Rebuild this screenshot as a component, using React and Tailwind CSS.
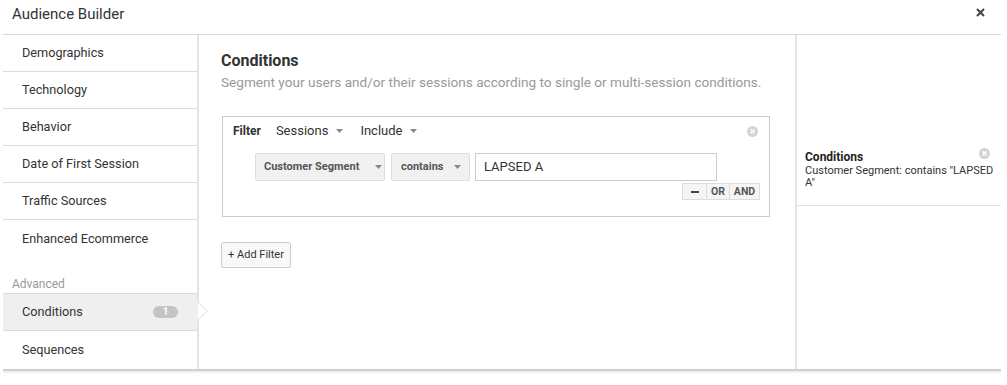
import React from "react";

function Caret() {
  return (
    <svg width="7" height="4" viewBox="0 0 7 4" className="ml-[8px]">
      <path d="M0 0 L7 0 L3.5 4 Z" fill="#888" />
    </svg>
  );
}

function CloseCircle() {
  return (
    <svg width="11" height="11" viewBox="0 0 11 11">
      <circle cx="5.5" cy="5.5" r="5.5" fill="#d4d4d4" />
      <path d="M3.5 3.5 L7.5 7.5 M7.5 3.5 L3.5 7.5" stroke="#fff" strokeWidth="1.4" />
    </svg>
  );
}

const items = [
  "Demographics",
  "Technology",
  "Behavior",
  "Date of First Session",
  "Traffic Sources",
];

export default function App() {
  return (
    <div className="w-[1007px] h-[385px] bg-white font-['Roboto',sans-serif] text-[#333] overflow-hidden">
      <div className="ml-[3px] w-[998px]">
        {/* header */}
        <div className="h-[35px] border-b border-[#d6d6d6] flex items-center justify-between pl-[9px] pr-[16px]">
          <div className="text-[15px] leading-[18px] text-[#333] -mt-[7px]">Audience Builder</div>
          <svg width="9" height="9" viewBox="0 0 9 9" className="-mt-[10px]">
            <path d="M1 1 L8 8 M8 1 L1 8" stroke="#444" strokeWidth="2" />
          </svg>
        </div>
        {/* body */}
        <div className="flex h-[336px] border-b-2 border-[#cfcfcf]">
          {/* sidebar */}
          <div className="w-[196px] border-r-2 border-[#e4e4e4] flex flex-col">
            {items.map((t) => (
              <div key={t} className="h-[37px] border-b border-[#dcdcdc] flex items-center pl-[19px] text-[12.7px]">
                {t}
              </div>
            ))}
            <div className="h-[37px] flex items-center pl-[19px] text-[12.7px]">Enhanced Ecommerce</div>
            <div className="h-[36px] flex items-end pl-[9px] pb-[1px] text-[12px] text-[#9a9a9a] leading-[15px]">Advanced</div>
            <div className="relative h-[38px] border-t border-b border-[#dcdcdc] bg-[#efefef] flex items-center justify-between pl-[19px] pr-[19px] text-[12.7px]">
              <span>Conditions</span>
              <span className="w-[25px] h-[12px] rounded-full bg-[#c4c4c4] text-white text-[10px] font-bold leading-[12px] flex items-center justify-center">1</span>
              <svg width="12" height="18" viewBox="0 0 12 18" className="absolute left-full top-[8px]">
                <path d="M0.5 0 L10.5 9 L0.5 18" fill="#fff" stroke="#dcdcdc" strokeWidth="1" />
              </svg>
            </div>
            <div className="h-[37px] flex items-center pl-[19px] text-[12.7px]">Sequences</div>
          </div>
          {/* main */}
          <div className="w-[596px] pl-[22px] pt-[16px]">
            <div className="text-[16px] leading-[19px] font-bold text-[#333]">Conditions</div>
            <div className="text-[13.6px] leading-[16px] text-[#999] mt-[4px] whitespace-nowrap">
              Segment your users and/or their sessions according to single or multi-session conditions.
            </div>
            <div className="ml-px mt-[26px] w-[548px] border border-[#cccccc] pl-[10px] pr-[9px] pt-[6px] pb-[16px]">
              <div className="flex items-center justify-between h-[16px]">
                <div className="flex items-center text-[12px]">
                  <span className="font-bold">Filter</span>
                  <span className="ml-[15px] text-[13px]">Sessions</span>
                  <Caret />
                  <span className="ml-[17px] text-[13px]">Include</span>
                  <Caret />
                </div>
                <div className="mr-[2px] mt-[1px]">
                  <CloseCircle />
                </div>
              </div>
              <div className="flex ml-[22px] mt-[14px] h-[28px]">
                <div className="w-[130px] h-[28px] bg-[#f1f1f1] border border-[#dedede] rounded-[2px] flex items-center pl-[8px] text-[11px] font-bold text-[#555] whitespace-nowrap">
                  Customer Segment
                  <span className="ml-[8px]"><Caret /></span>
                </div>
                <div className="ml-[6px] w-[79px] h-[28px] bg-[#f1f1f1] border border-[#dedede] rounded-[2px] flex items-center pl-[9px] text-[11px] font-bold text-[#555] whitespace-nowrap">
                  contains
                  <span className="ml-[3px]"><Caret /></span>
                </div>
                <div className="ml-[5px] w-[242px] h-[28px] border border-[#cccccc] flex items-center pl-[8px] text-[13px] text-[#333]">
                  LAPSED A
                </div>
              </div>
              <div className="flex justify-end mt-[2px]">
                <div className="flex h-[17px] border border-[#dddddd] bg-[#f5f5f5] text-[10.5px] font-bold text-[#555] leading-[15px]">
                  <div className="w-[24px] flex items-center justify-center border-r border-[#dddddd]">
                    <span className="w-[8px] h-[2px] bg-[#444]"></span>
                  </div>
                  <div className="w-[23px] flex items-center justify-center border-r border-[#dddddd]">OR</div>
                  <div className="w-[29px] flex items-center justify-center">AND</div>
                </div>
              </div>
            </div>
            <div className="mt-[25px] w-[70px] h-[26px] border border-[#cccccc] rounded-[2px] bg-[#f8f8f8] flex items-center justify-center text-[11px] text-[#333]">
              + Add Filter
            </div>
          </div>
          {/* right */}
          <div className="w-[206px] border-l-2 border-[#e4e4e4] pt-[112px]">
            <div className="border-b border-[#e0e0e0] pl-[8px] pr-[6px] pt-[3px] pb-[16px]">
              <div className="flex items-start justify-between pr-[6px]">
                <div className="text-[12px] leading-[14px] font-bold text-[#222]">Conditions</div>
                <div className="-mt-[2px] -mr-[1px]">
                  <CloseCircle />
                </div>
              </div>
              <div className="text-[11px] leading-[12px] text-[#333] mt-[1px] w-[190px]">
                Customer Segment: contains "LAPSED A"
              </div>
            </div>
          </div>
        </div>
        <div className="h-[2px] bg-[#f0f0f0]"></div>
      </div>
    </div>
  );
}
